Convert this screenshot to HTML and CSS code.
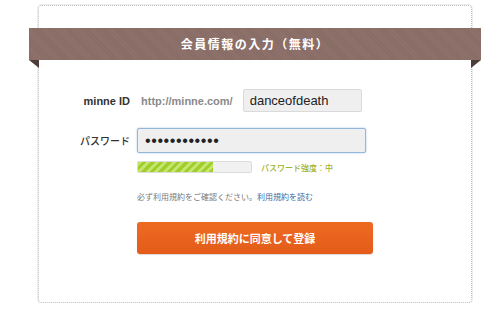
FILE: index.html
```html
<!DOCTYPE html>
<html lang="ja">
<head>
    <meta charset="UTF-8">
    <meta name="viewport" content="width=device-width, initial-scale=1.0">
    <title>会員情報の入力</title>
    <link rel="stylesheet" href="styles.css">
</head>
<body>

    <div class="card">
        <h1 class="ribbon">会員情報の入力（無料）</h1>

        <form class="signup">
            <div class="row">
                <label class="label" for="minneId">minne ID</label>
                <span class="prefix">http://minne.com/</span>
                <input class="field field-id" type="text" id="minneId" value="danceofdeath">
            </div>

            <div class="row row-pass">
                <label class="label" for="password">パスワード</label>
                <input class="field field-pass" type="password" id="password" value="abcdefghijkl">
            </div>

            <div class="strength">
                <div class="meter"><div class="meter-fill" style="width: 66%"></div></div>
                <span class="strength-text">パスワード強度：中</span>
            </div>

            <p class="notice">必ず利用規約をご確認ください。<a href="#">利用規約を読む</a></p>

            <button type="submit" class="submit">利用規約に同意して登録</button>
        </form>
    </div>

</body>
</html>
```

FILE: styles.css
```css
body {
    margin: 0;
    background-color: #fff;
    font-family: "Liberation Sans", "Noto Sans CJK JP", sans-serif;
}
.card {
    box-sizing: border-box;
    width: 434px;
    height: 298px;
    margin: 5px 0 0 38px;
    border: 1px dotted #bcbcbc;
    border-radius: 4px;
    box-shadow: 0 0 0 1px #ececec;
    background-color: #fff;
}
.ribbon {
    position: relative;
    height: 32px;
    margin: 22px -10px 0 -10px;
    background-color: #8e726b;
    background-image: repeating-linear-gradient(45deg, rgba(0, 0, 0, 0.05) 0 1px, transparent 1px 2px);
    color: #fff;
    font-family: "Noto Sans CJK JP", sans-serif;
    font-size: 12px;
    font-weight: bold;
    letter-spacing: 1.5px;
    line-height: 32px;
    text-align: center;
}
.ribbon::before,
.ribbon::after {
    content: "";
    position: absolute;
    top: 100%;
    width: 0;
    height: 0;
    border-top: 8px solid #4d3c37;
}
.ribbon::before {
    left: 0;
    border-left: 10px solid transparent;
}
.ribbon::after {
    right: 0;
    border-right: 10px solid transparent;
}
.signup {
    padding-left: 98px;
}
.row {
    display: flex;
    align-items: center;
    margin-top: 29px;
    margin-left: -98px;
}
.row-pass {
    margin-top: 16px;
}
.label {
    width: 91px;
    margin-right: 7px;
    text-align: right;
    font-size: 11px;
    font-weight: bold;
    color: #333;
}
.row-pass .label {
    font-family: "Noto Sans CJK JP", sans-serif;
    font-size: 10px;
    font-weight: 500;
    color: #333;
}
.prefix {
    margin-left: 4px;
    margin-right: 10px;
    font-size: 11px;
    font-weight: bold;
    color: #8a8a8a;
}
.field {
    box-sizing: border-box;
    margin: 0;
    padding: 0 6px;
    border-radius: 2px;
    background-color: #efefef;
    color: #222;
    font-family: "Liberation Sans", sans-serif;
    font-size: 13px;
    outline: none;
}
.field-id {
    width: 119px;
    height: 23px;
    border: 1px solid #dadada;
}
.field-pass {
    width: 229px;
    height: 25px;
    padding-left: 7px;
    border: 1px solid #93b8dc;
    box-shadow: 0 0 2px rgba(100, 150, 210, 0.6);
    font-size: 16px;
    letter-spacing: 0.6px;
}
.strength {
    display: flex;
    align-items: center;
    margin-top: 8px;
}
.meter {
    box-sizing: border-box;
    width: 115px;
    height: 12px;
    border: 1px solid #dcdcdc;
    border-radius: 2px;
    background-color: #f1f1f1;
    overflow: hidden;
}
.meter-fill {
    height: 100%;
    background-color: #9fcf2b;
    background-image: repeating-linear-gradient(-45deg, #9fcf2b 0 3px, #c8e36e 3px 6px);
}
.strength-text {
    margin-left: 9px;
    font-family: "Noto Sans CJK JP", sans-serif;
    font-size: 8px;
    font-weight: 500;
    color: #9fb32a;
}
.notice {
    margin: 18px 0 0 0;
    font-family: "Noto Sans CJK JP", sans-serif;
    font-size: 8px;
    line-height: 12px;
    color: #7a7a7a;
}
.notice a {
    color: #3a6ea5;
    text-decoration: none;
}
.submit {
    display: block;
    width: 236px;
    height: 32px;
    margin-top: 19px;
    border: none;
    border-radius: 3px;
    background: linear-gradient(#ee6a22, #e35c1a);
    box-shadow: 0 1px 1px rgba(0, 0, 0, 0.15);
    color: #fff;
    font-family: "Noto Sans CJK JP", sans-serif;
    font-size: 11px;
    font-weight: bold;
    cursor: pointer;
}
```
